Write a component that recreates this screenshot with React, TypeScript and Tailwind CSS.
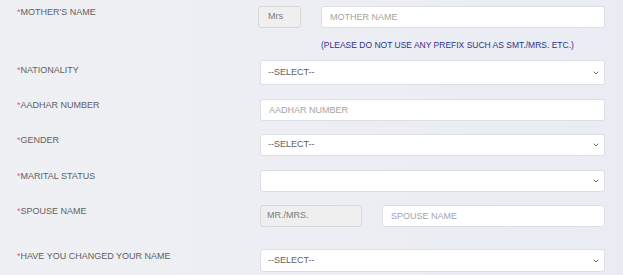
import { ChevronDown } from 'lucide-react';

function Label({ text, top = 0 }: { text: string; top?: number }) {
  return (
    <div className="w-[260px] shrink-0 pl-[17px] leading-[12px] text-[#606060]" style={{ paddingTop: top }}>
      <span className="text-[#e25a78]">*</span>
      {text}
    </div>
  );
}

function Select({ value, h = 'h-[22px]' }: { value: string; h?: string }) {
  return (
    <div className={`relative flex-1 ${h}`}>
      <div className="flex h-full items-center rounded-[3px] border border-[#dcdfe5] bg-white pl-[7px] text-[#606060]">
        {value}
      </div>
      <ChevronDown className="absolute right-[5px] top-1/2 h-[8px] w-[8px] -translate-y-1/2 text-[#6a6a6a]" strokeWidth={3} />
    </div>
  );
}

function Input({ placeholder, className = '' }: { placeholder: string; className?: string }) {
  return (
    <input
      placeholder={placeholder}
      className={`h-[22px] rounded-[3px] border border-[#dcdfe5] bg-white pl-[8px] text-[9px] text-[#606060] outline-none placeholder:text-[#a4a4a4] ${className}`}
    />
  );
}

function Prefix({ text, className = '' }: { text: string; className?: string }) {
  return (
    <div className={`flex h-[22px] items-center rounded-[3px] border border-[#d9d9d9] bg-[#efefef] text-[#7a7a7a] ${className}`}>
      {text}
    </div>
  );
}

export default function App() {
  return (
    <div className="min-h-[275px] w-full bg-gradient-to-r from-[#eff0f3] to-[#e9ecf3] pr-[18px] pt-[6px] font-['Liberation_Sans',Arial,sans-serif] text-[9px]">
      <div className="flex items-start">
        <Label text="MOTHER'S NAME" />
        <div className="flex flex-1 gap-[20px]">
          <Prefix text="Mrs" className="-ml-[2px] w-[43px] pl-[9px]" />
          <Input placeholder="MOTHER NAME" className="flex-1" />
        </div>
      </div>
      <div className="mt-[11px] pl-[321px] text-[8.5px] leading-[12px] text-[#2f318a]">
        (PLEASE DO NOT USE ANY PREFIX SUCH AS SMT./MRS. ETC.)
      </div>

      <div className="mt-[9px] flex items-start">
        <Label text="NATIONALITY" top={4} />
        <Select value="--SELECT--" h="h-[25px]" />
      </div>

      <div className="mt-[14px] flex items-start">
        <Label text="AADHAR NUMBER" />
        <Input placeholder="AADHAR NUMBER" className="flex-1" />
      </div>

      <div className="mt-[13px] flex items-start">
        <Label text="GENDER" />
        <Select value="--SELECT--" />
      </div>

      <div className="mt-[14px] flex items-start">
        <Label text="MARITAL STATUS" />
        <Select value="" />
      </div>

      <div className="mt-[13px] flex items-start">
        <Label text="SPOUSE NAME" />
        <div className="flex flex-1 gap-[20px]">
          <Prefix text="MR./MRS." className="w-[102px] pl-[6px]" />
          <Input placeholder="SPOUSE NAME" className="flex-1" />
        </div>
      </div>

      <div className="mt-[22px] flex items-start">
        <Label text="HAVE YOU CHANGED YOUR NAME" top={1} />
        <Select value="--SELECT--" h="h-[23px]" />
      </div>
    </div>
  );
}
